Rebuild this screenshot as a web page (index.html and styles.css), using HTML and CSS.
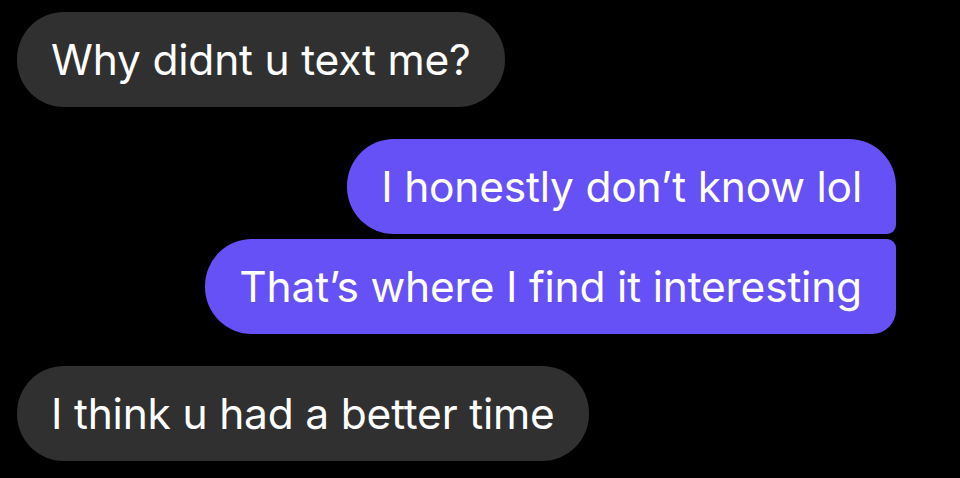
FILE: index.html
```html
<!DOCTYPE html>
<html>
<head>
<meta charset="utf-8">
<link rel="stylesheet" href="styles.css">
</head>
<body>
<div class="chat">
  <div class="row in"><div class="bubble grey">Why didnt u text me?</div></div>
  <div class="group out">
    <div class="row"><div class="bubble purple first">I honestly don’t know lol</div></div>
    <div class="row"><div class="bubble purple last">That’s where I find it interesting</div></div>
  </div>
  <div class="row in"><div class="bubble grey">I think u had a better time</div></div>
</div>
</body>
</html>
```
FILE: styles.css
```css
html, body {
  margin: 0;
  padding: 0;
  background: #000;
}
body {
  width: 960px;
  height: 478px;
  overflow: hidden;
  font-family: Inter, "Noto Sans", sans-serif;
}
.chat {
  display: flex;
  flex-direction: column;
  gap: 32px;
  padding: 12px 64px 0 17px;
}
.row {
  display: flex;
}
.in {
  justify-content: flex-start;
}
.group {
  display: flex;
  flex-direction: column;
  gap: 5px;
}
.group .row {
  justify-content: flex-end;
}
.bubble {
  box-sizing: border-box;
  height: 95px;
  display: flex;
  align-items: center;
  padding: 0 34px;
  border-radius: 47px;
  color: #fff;
  font-size: 42.5px;
  letter-spacing: -0.2px;
  white-space: nowrap;
}
.grey {
  background: #303030;
}
.purple {
  background: #6651f6;
}
.first {
  border-bottom-right-radius: 9px;
}
.last {
  border-top-right-radius: 9px;
  border-bottom-right-radius: 24px;
}
```
